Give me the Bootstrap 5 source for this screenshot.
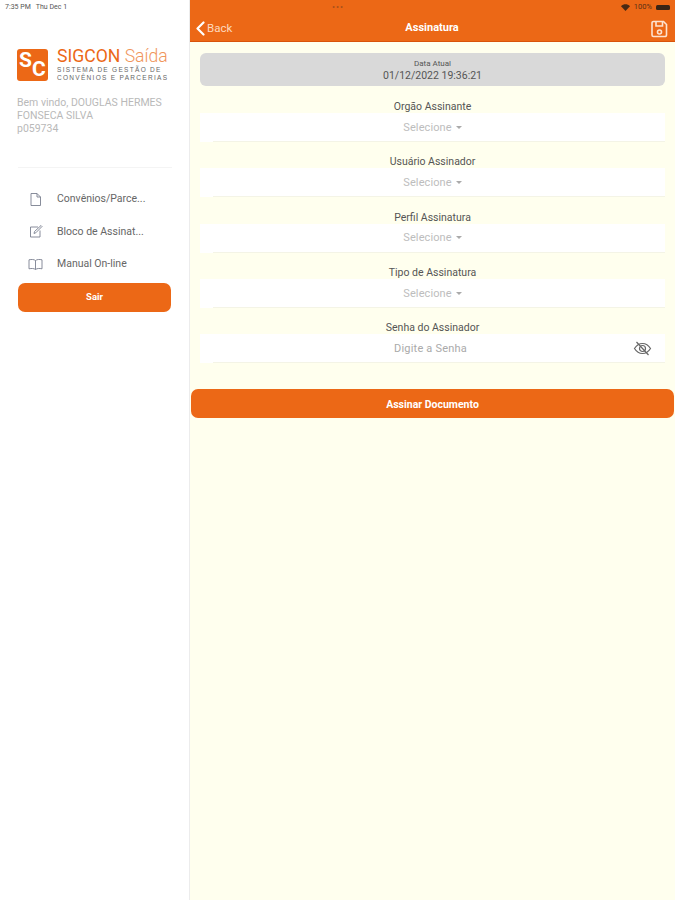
<!DOCTYPE html>
<html lang="pt-BR">
<head>
    <meta charset="UTF-8">
    <meta name="viewport" content="width=device-width, initial-scale=1.0">
    <title>Assinatura</title>
    <link href="https://cdn.jsdelivr.net/npm/bootstrap@5.3.0/dist/css/bootstrap.min.css" rel="stylesheet">
    <style>
        html, body { height: 900px; overflow: hidden; }
        body { font-family: Roboto, "Liberation Sans", sans-serif; background: #fff; color: #444; }
        .app-shell { height: 900px; }
        .side-pane { width: 190px; flex: none; border-right: 1px solid #ececec; background: #fff; }
        .status-left { height: 14px; padding: 1px 0 0 5px; font-size: 7px; line-height: 12px; color: #555; white-space: pre; }
        .brand-wrap { padding: 35px 0 0 17px; gap: 9px; }
        .brand-mark { width: 31px; height: 32px; background: #ec6816; border-radius: 3px; color: #fff; font-size: 21px; line-height: 1; position: relative; }
        .brand-mark span { position: absolute; font-weight: 700; }
        .brand-mark .s-one { left: 2px; top: 1px; }
        .brand-mark .s-two { left: 15px; top: 10px; }
        .brand-title { font-size: 17.6px; line-height: 15px; color: #ec6816; white-space: nowrap; }
        .brand-title em { font-style: normal; color: #f0965c; font-weight: 300; }
        .brand-sub { font-size: 6.5px; line-height: 8px; letter-spacing: 1.3px; color: #666; margin-top: 2px; white-space: nowrap; font-family: "Liberation Sans", sans-serif; }
        .welcome-text { padding: 14px 0 0 17px; font-size: 10.5px; line-height: 13.2px; color: #b9b9b9; height: 85px; }
        .side-rule { margin: 0 17px 0 18px; border-top: 1px solid #f4f4f4; }
        .side-menu { padding: 15px 0 0 28px; }
        .side-link { height: 32.5px; gap: 14px; font-size: 10.5px; color: #666; }
        .side-link svg { width: 15px; height: 15px; flex: none; }
        .orange-btn { background: #ec6816; border: 0; color: #fff; font-size: 10.5px; font-weight: 700; border-radius: 7px; height: 29px; padding: 1px 0 0; }
        .orange-btn:hover { background: #ec6816; color: #fff; }
        .side-btn-wrap { padding: 2px 18px 0 18px; }
        .side-btn-wrap .orange-btn { font-size: 9.5px; }
        .main-pane { background: #ffffee; min-width: 0; }
        .top-bar { height: 42px; background: #ec6816; border-bottom: 1px solid #d9530b; color: #fff; position: relative; }
        .top-status { height: 14px; padding-right: 5px; font-size: 7.5px; gap: 4px; color: #5a3015; }
        .top-dots { position: absolute; left: 142px; top: 1px; font-size: 9px; line-height: 12px; letter-spacing: 1px; color: #a8501a; }
        .battery-shape { width: 14px; height: 5px; background: #3a2415; border-radius: 1.5px; }
        .top-row { height: 28px; padding: 1px 7px 0 6px; }
        .back-link { font-size: 11.5px; gap: 2px; color: #fdd9bf; width: 60px; }
        .top-title { font-size: 11px; font-weight: 700; }
        .save-slot { width: 60px; }
        .date-panel { margin: 11px 10px 0 10px; height: 33px; background: #d9d9d9; border-radius: 6px; text-align: center; color: #555; }
        .date-label { font-size: 8px; line-height: 10px; padding-top: 6px; }
        .date-value { font-size: 10.5px; line-height: 13px; }
        .form-stack { padding: 14px 10px 0 10px; }
        .field-block { height: 55.3px; }
        .field-label { font-size: 10.5px; line-height: 13px; text-align: center; color: #555; }
        .field-box { height: 29px; padding-top: 1px; background: #fff; text-align: center; font-size: 11px; color: #bdbdbd; position: relative; letter-spacing: .1px; }
        .field-box::after { content: ""; position: absolute; left: 13px; right: 0; bottom: 0; border-bottom: 1px solid #f4f4e6; }
        .pass-hint { color: #aaa; margin-right: 4px; letter-spacing: .2px; }
        .caret-mark { display: inline-block; margin-left: 4px; vertical-align: 2px; border-left: 3px solid transparent; border-right: 3px solid transparent; border-top: 3px solid #aaa; }
        .eye-mark { position: absolute; right: 13px; top: 6px; width: 19px; height: 17px; }
        .sign-wrap { padding: 0 1px; margin-top: 13px; }
    </style>
</head>
<body>
    <div class="app-shell d-flex">
        <div class="side-pane d-flex flex-column">
            <div class="status-left">7:35 PM   Thu Dec 1</div>
            <div class="brand-wrap d-flex">
                <div class="brand-mark"><span class="s-one">S</span><span class="s-two">C</span></div>
                <div>
                    <div class="brand-title">SIGCON <em>Saída</em></div>
                    <div class="brand-sub">SISTEMA DE GESTÃO DE<br>CONVÊNIOS E PARCERIAS</div>
                </div>
            </div>
            <div class="welcome-text">Bem vindo, DOUGLAS HERMES<br>FONSECA SILVA<br>p059734</div>
            <div class="side-rule"></div>
            <div class="side-menu">
                <div class="side-link d-flex align-items-center">
                    <svg viewBox="0 0 15 15" fill="none" stroke="#7a8090" stroke-width=".9"><path d="M3 1.500h6l3.500 3.500v8.500H3z"/><path d="M9 1.500V5h3.500"/></svg>
                    <span>Convênios/Parce...</span>
                </div>
                <div class="side-link d-flex align-items-center">
                    <svg viewBox="0 0 15 15" fill="none" stroke="#7a8090" stroke-width=".9"><path d="M10 3H2.500v10h9.500V6.500"/><path d="M6 9.500l.5-2L13 1.500l1 1-6.200 6.300z"/></svg>
                    <span>Bloco de Assinat...</span>
                </div>
                <div class="side-link d-flex align-items-center">
                    <svg viewBox="0 0 15 15" fill="none" stroke="#7a8090" stroke-width=".9"><path d="M7.500 3.500C6 2.300 3.500 2.300 1 2.800v9c2.500-.5 5-.5 6.500.7 1.500-1.200 4-1.200 6.500-.7v-9c-2.500-.5-5-.5-6.500.7z"/><path d="M7.500 3.500v9"/></svg>
                    <span>Manual On-line</span>
                </div>
            </div>
            <div class="side-btn-wrap">
                <button class="btn orange-btn w-100">Sair</button>
            </div>
        </div>
        <div class="main-pane flex-grow-1">
            <div class="top-bar">
                <div class="top-dots">•••</div>
                <div class="top-status d-flex justify-content-end align-items-center">
                    <svg width="9" height="7" viewBox="0 0 9 7" fill="#4a2a14"><path d="M0 2.200C2.500-.4 6.500-.4 9 2.200L4.500 7z"/></svg>
                    <span>100%</span>
                    <span class="battery-shape"></span>
                </div>
                <div class="top-row d-flex align-items-center justify-content-between">
                    <div class="back-link d-flex align-items-center">
                        <svg width="9" height="15" viewBox="0 0 9 15" fill="none" stroke="#fff" stroke-width="2.200" stroke-linecap="round" stroke-linejoin="round"><path d="M7.500 1.500L1.500 7.500l6 6"/></svg>
                        <span>Back</span>
                    </div>
                    <div class="top-title">Assinatura</div>
                    <div class="save-slot d-flex justify-content-end">
                        <svg width="17" height="18" viewBox="0 0 17 18" fill="none" stroke="#fde3d0" stroke-width="1.600"><path d="M2.500 1.500h10l3 3v10.500a1.500 1.500 0 0 1-1.500 1.500H2.500A1.500 1.500 0 0 1 1 15V3a1.500 1.500 0 0 1 1.500-1.500z"/><path d="M5 1.500v4.500h6.500V1.500"/><circle cx="8.500" cy="12" r="2"/></svg>
                    </div>
                </div>
            </div>
            <div class="date-panel">
                <div class="date-label">Data Atual</div>
                <div class="date-value">01/12/2022 19:36:21</div>
            </div>
            <div class="form-stack">
                <div class="field-block">
                    <div class="field-label">Orgão Assinante</div>
                    <div class="field-box d-flex align-items-center justify-content-center"><span>Selecione<span class="caret-mark"></span></span></div>
                </div>
                <div class="field-block">
                    <div class="field-label">Usuário Assinador</div>
                    <div class="field-box d-flex align-items-center justify-content-center"><span>Selecione<span class="caret-mark"></span></span></div>
                </div>
                <div class="field-block">
                    <div class="field-label">Perfil Assinatura</div>
                    <div class="field-box d-flex align-items-center justify-content-center"><span>Selecione<span class="caret-mark"></span></span></div>
                </div>
                <div class="field-block">
                    <div class="field-label">Tipo de Assinatura</div>
                    <div class="field-box d-flex align-items-center justify-content-center"><span>Selecione<span class="caret-mark"></span></span></div>
                </div>
                <div class="field-block">
                    <div class="field-label">Senha do Assinador</div>
                    <div class="field-box d-flex align-items-center justify-content-center">
                        <span class="pass-hint">Digite a Senha</span>
                        <svg class="eye-mark" viewBox="0 0 19 17" fill="none" stroke="#666" stroke-width="1.200"><path d="M1.500 8.500C4 4.500 7 3.500 9.500 3.500s5.500 1 8 5c-2.500 4-5.500 5-8 5s-5.500-1-8-5z"/><circle cx="9.500" cy="8.500" r="3"/><path d="M3.500 2l12 13"/></svg>
                    </div>
                </div>
            </div>
            <div class="sign-wrap">
                <button class="btn orange-btn w-100">Assinar Documento</button>
            </div>
        </div>
    </div>
    <script src="https://cdn.jsdelivr.net/npm/bootstrap@5.3.0/dist/js/bootstrap.bundle.min.js"></script>
</body>
</html>
